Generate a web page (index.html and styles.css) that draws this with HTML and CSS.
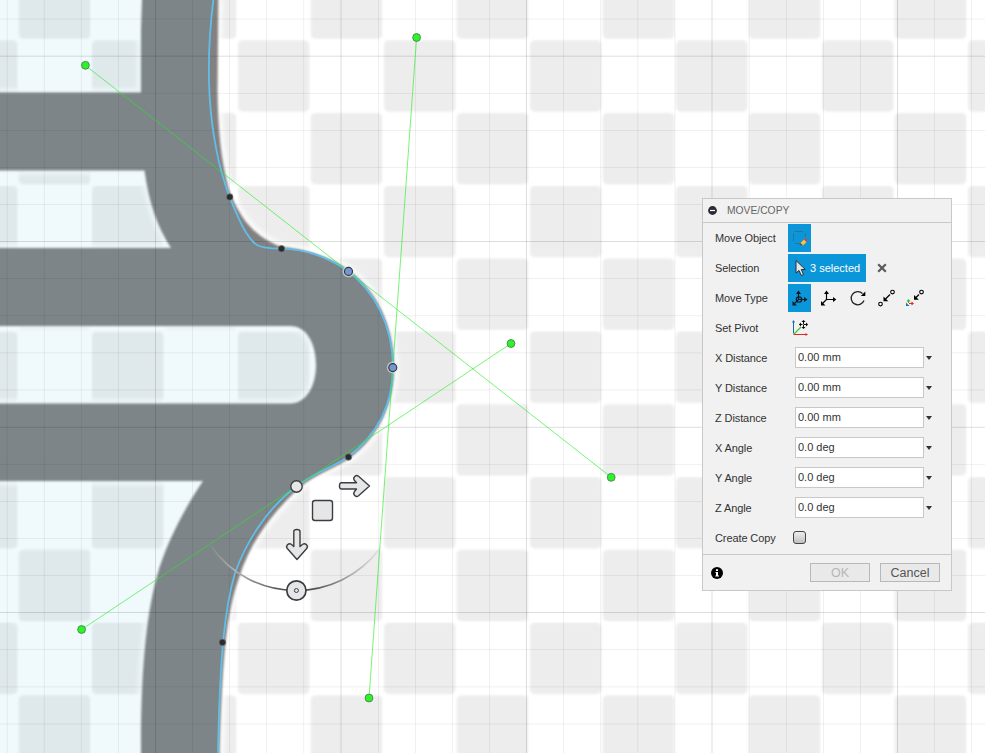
FILE: index.html
```html
<!DOCTYPE html>
<html lang="en">
<head>
<meta charset="utf-8">
<title>Move/Copy</title>
<link rel="stylesheet" href="styles.css">
</head>
<body>
<main class="workspace">
<svg class="canvas" width="985" height="753" viewBox="0 0 985 753">
  <defs>
    <pattern id="checker" x="91.2" y="39.700" width="146" height="145.6" patternUnits="userSpaceOnUse">
      <g fill="#ededed" filter="url(#soft)">
        <rect x=".7" y=".5" width="71.5" height="71.5" rx="5"/>
        <rect x="73.6" y="73.2" width="71.5" height="71.5" rx="5"/>
      </g>
    </pattern>
    <filter id="soft" color-interpolation-filters="sRGB"><feGaussianBlur stdDeviation="1"/></filter>
    <filter id="halo" color-interpolation-filters="sRGB"><feGaussianBlur stdDeviation="2"/></filter>
    <linearGradient id="arc" gradientUnits="userSpaceOnUse" x1="210" x2="382" y1="0" y2="0">
      <stop offset="0" stop-color="#aaa" stop-opacity=".15"/>
      <stop offset=".15" stop-color="#b0b0b0"/>
      <stop offset=".42" stop-color="#505052"/>
      <stop offset=".62" stop-color="#555557"/>
      <stop offset=".85" stop-color="#b8b8b8"/>
      <stop offset="1" stop-color="#bbb" stop-opacity=".15"/>
    </linearGradient>
    <path id="body" fill-rule="evenodd" d="M-20 -20H218.500L217.500 90C218 130 221 160 229 190C240 218 252 235 281 247C306 249 330 257 350 271C376 291 394 325 394 367C394 403 380 435 350 458C335 468 316 474 299 488C273 512 250 542 239 578C227 612 222 650 219 780H-20Z
      M-30 -30V92.500H141V30L143 -30Z M-30 170.500V248H171C157 226 149 203 144.500 170.500Z
      M-30 326V403.500H290C307 403.500 316 385 316 365C316 344 307 326 290 326Z
      M-30 481V790H141V745C141 680 145 620 157 576C166 544 183 511 203 481Z"/>
  </defs>
  <rect width="985" height="753" fill="#fff"/>
  <rect width="985" height="753" fill="url(#checker)"/>
  <use href="#body" fill="#fff" stroke="#fff" stroke-width="9" opacity=".75" filter="url(#halo)"/>
  <use href="#body" fill="#828080" filter="url(#soft)"/>
  <path fill="rgb(83,182,225)" fill-opacity=".087" d="M0 0H213.500C207 50 205 110 221.500 172C224 180 226 188 229.500 197C237 215 246 238 257 245C263 248.500 272 248.500 281.500 248.600C306 249 328 257 348 271C374 291 393 325 393 367C393 403 378 434 348 457C334 467 314 472 296 487C265 510 245 545 235 573C225 608 220 650 218 753H0Z"/>
  <g stroke="#000" stroke-opacity=".06" fill="none">
    <path d="M7.200 0V753M44.300 0V753M81.400 0V753M118.500 0V753M192.500 0V753M229.500 0V753M266.500 0V753M303.700 0V753M378.500 0V753M415.500 0V753M452.500 0V753M489.500 0V753M563.500 0V753M600.700 0V753M637.800 0V753M674.900 0V753M749.200 0V753M786.400 0V753M823.500 0V753M860.500 0V753M934.500 0V753M971.600 0V753"/>
    <path d="M0 19H985M0 93.400H985M0 130.500H985M0 167.500H985M0 204.500H985M0 278.500H985M0 315.700H985M0 352.900H985M0 389.900H985M0 464.400H985M0 501.500H985M0 538.500H985M0 575.500H985M0 649.500H985M0 686.900H985M0 724H985"/>
  </g>
  <path stroke="#000" stroke-opacity=".13" fill="none" d="M155.500 0V753M341 0V753M526.500 0V753M712 0V753M897.500 0V753M0 56.200H985M0 241.500H985M0 427.300H985M0 612.500H985"/>
  <path fill="none" stroke="#60bee8" stroke-width="1.800" d="M213.500 -1C207 50 205 110 221.500 172C224 180 226 188 229.500 197C237 215 246 238 257 245C263 248.500 272 248.500 281.500 248.600C306 249 328 257 348 271C374 291 393 325 393 367C393 403 378 434 348 457C334 467 314 472 296 487C265 510 245 545 235 573C225 608 220 650 218 754"/>
  <path fill="none" stroke="#22ee22" stroke-opacity=".62" stroke-width="1" d="M85.500 65.500L611.300 477.300M416.600 37.500L369 698M511 343.500L81.600 629.500"/>
  <g fill="#2df32d" stroke="#4a8f4a" stroke-width="1">
    <circle cx="85.400" cy="65.300" r="3.900"/><circle cx="416.600" cy="37.500" r="3.900"/><circle cx="511" cy="343.500" r="3.900"/>
    <circle cx="611.200" cy="477.300" r="3.900"/><circle cx="369" cy="698" r="3.900"/><circle cx="81.600" cy="629.500" r="3.900"/>
  </g>
  <g fill="#2b2b2b" stroke="#777" stroke-opacity=".75" stroke-width="1">
    <circle cx="229.700" cy="197" r="3.300"/><circle cx="281.500" cy="248.800" r="3.300"/><circle cx="348.400" cy="457" r="3.300"/><circle cx="222.400" cy="642.400" r="3.300"/>
  </g>
  <g fill="#eee" fill-opacity=".55"><circle cx="348.500" cy="271.400" r="6"/><circle cx="392.800" cy="367.600" r="6"/></g>
  <g fill="#7596d2" stroke="#30343c" stroke-width="1.100"><circle cx="348.500" cy="271.400" r="4"/><circle cx="392.800" cy="367.600" r="4"/></g>
  <path d="M211 546C251 604 338 606 381 547" fill="none" stroke="url(#arc)" stroke-width="1.700"/>
  <g fill="#e5e6e8" stroke="#3d3d3f" stroke-width="1.400" stroke-linejoin="round">
    <circle cx="296.500" cy="486.500" r="5.700"/>
    <rect x="312.500" y="500.500" width="20" height="20" rx="2.500"/>
    <circle cx="296.400" cy="590.500" r="9.600" stroke-width="1.700"/>
    <circle cx="296.400" cy="590.500" r="2" stroke-width="1"/>
    <path id="arrow" d="M341.500 482.800H356.500L354.300 480.200C352.500 477.700 356 474.200 358.500 476.300L369.500 486L358.500 495.700C356 497.800 352.500 494.300 354.300 491.800L356.500 489H341.500C338.800 489 338.800 482.800 341.500 482.800Z"/>
    <use href="#arrow" transform="matrix(0 1 1 0 -189 190)"/>
  </g>
</svg>

<section class="panel">
  <header class="panel-head">
    <svg width="9" height="9"><circle cx="4.500" cy="4.500" r="4.400" fill="#2c2b33"/><path d="M2 4.500H7" stroke="#fff" stroke-width="1.200"/></svg>
    <span>MOVE/COPY</span>
  </header>
  <div class="rows">
    <div class="row"><span class="label">Move Object</span>
      <span class="tile"><svg width="23" height="28"><path d="M7 7.500H16M5.500 9V17M17.500 9V13M7 19.500H12" stroke="#37718f" stroke-dasharray="8 1" fill="none"/><path d="M12.500 19L16 15.500L18.500 18L15 21.500Z" fill="#ffc13d"/><path d="M16 15.500L17.500 14L19.500 16L18.500 18Z" fill="#ee3b38"/><path d="M12.500 19L14.500 21L11.500 21.500Z" fill="#555"/></svg></span>
    </div>
    <div class="row"><span class="label">Selection</span>
      <span class="tile selection"><svg width="22" height="28"><path d="M8 6.500V19L11 16.500L13.300 21.500L15.500 20.500L13.300 15.500H17.300Z" fill="#e4e4e4" stroke="#22323c"/></svg>3 selected</span>
      <svg class="clear" width="10" height="10"><path d="M1.200 1.200L8.800 8.800M8.800 1.200L1.200 8.800" stroke="#5c5c5c" stroke-width="2.300"/></svg>
    </div>
    <div class="row"><span class="label">Move Type</span>
      <span class="tile"><svg width="23" height="28"><g fill="none" stroke="#101820" stroke-width="1.150"><path d="M10.500 8V15.500H17M10.500 15.500L5.500 20.500"/><circle cx="11" cy="15.500" r="2.700"/></g><path d="M8 10L10.500 6.500L13 10ZM16 13L19.500 15.500L16 18ZM4.500 17V21.500H9Z" fill="#101820"/></svg></span>
      <svg class="tool first" width="29" height="28"><path d="M15.500 8V15.500H23M15.500 15.500L11 20" fill="none" stroke="#000" stroke-width="1.150"/><path d="M13 10L15.500 6.500L18 10ZM22 13L25.300 15.500L22 18ZM10 17V21.500H14.500Z"/></svg>
      <svg class="tool" width="29" height="28"><path d="M21.500 9.500A6.600 6.600 0 1 0 23 16.500" fill="none" stroke="#222" stroke-width="1.300"/><path d="M24.300 7.500V12H19.800Z"/></svg>
      <svg class="tool" width="29" height="28"><g fill="#fff" stroke="#000" stroke-width="1.150"><circle cx="10.500" cy="20" r="1.800"/><circle cx="22.500" cy="8" r="1.800"/><path d="M20 10.500L15 15.500"/></g><path d="M13.500 12.500V17.300H18.300Z"/></svg>
      <svg class="tool" width="29" height="28"><g fill="#fff" stroke="#000" stroke-width="1.150"><circle cx="22.500" cy="8" r="1.800"/><path d="M20 10.500L16.500 14"/></g><path d="M15 11V15.800H19.800Z"/><path d="M9.500 19V16" stroke="#22c51b"/><path d="M7.500 17.500L9.500 15L11.500 17.500Z" fill="#22c51b"/><path d="M10 19.500H13" stroke="#e22"/><path d="M12.500 17.500L15 19.500L12.500 21.500Z" fill="#e22"/><path d="M7 18.500V22H10.500Z" fill="#1b70bb"/></svg>
    </div>
    <div class="row"><span class="label">Set Pivot</span>
      <svg width="24" height="28"><path d="M5.500 19.500V7" stroke="#1967b0"/><path d="M4 8.500L5.500 6L7 8.500Z" fill="#1967b0"/><path d="M6 20L13 13" stroke="#45c926" stroke-width="1.200"/><path d="M5.500 20.500H19" stroke="#df2929"/><path d="M17.500 19L20 20.500L17.500 22Z" fill="#df2929"/><path d="M15.500 7V15M11.500 10.500H19.500" stroke="#111" stroke-dasharray="3 1"/><path d="M13.500 8L15.500 6L17.500 8ZM13.500 13L15.500 15L17.500 13ZM13 8.500L11 10.500L13 12.500ZM18 8.500L20 10.500L18 12.500Z"/></svg>
    </div>
    <div class="row"><span class="label">X Distance</span><span class="field">0.00 mm</span><i class="caret"></i></div>
    <div class="row"><span class="label">Y Distance</span><span class="field">0.00 mm</span><i class="caret"></i></div>
    <div class="row"><span class="label">Z Distance</span><span class="field">0.00 mm</span><i class="caret"></i></div>
    <div class="row"><span class="label">X Angle</span><span class="field">0.0 deg</span><i class="caret"></i></div>
    <div class="row"><span class="label">Y Angle</span><span class="field">0.0 deg</span><i class="caret"></i></div>
    <div class="row"><span class="label">Z Angle</span><span class="field">0.0 deg</span><i class="caret"></i></div>
    <div class="row"><span class="label">Create Copy</span><span class="check"></span></div>
  </div>
  <footer class="panel-foot">
    <svg class="info" width="12" height="12"><circle cx="6" cy="6" r="6"/><path d="M5 2.300H7V4H5ZM4.500 5H7V8.500H8V9.500H4.300V8.500H5V6H4.500Z" fill="#fff"/></svg>
    <button class="btn" disabled>OK</button>
    <button class="btn">Cancel</button>
  </footer>
</section>
</main>
</body>
</html>
```
FILE: styles.css
```css
* { box-sizing: border-box; }
body { margin: 0; background: #fff; overflow: hidden; font: 11px "Liberation Sans", Arial, sans-serif; color: #333; }
svg { display: block; flex: none; }
.workspace { position: relative; width: 985px; height: 753px; overflow: hidden; }
.panel { position: absolute; left: 702px; top: 198px; width: 250px; height: 393px; display: flex; flex-direction: column; background: #f1f1f1; border: 1px solid #c8c8c8; }
.panel-head { height: 24px; flex: none; display: flex; align-items: center; gap: 10px; padding-left: 5px; border-bottom: 1px solid #c8c8c8; color: #666; font-size: 10.3px; }
.rows { height: 331px; flex: none; }
.row { height: 30px; display: flex; align-items: center; padding-left: 12px; }
.label { width: 73px; flex: none; padding-bottom: 1px; white-space: nowrap; letter-spacing: -.1px; }
.tile { width: 23px; height: 28px; display: flex; align-items: center; background: #0a96d9; }
.selection { width: 78px; color: #fff; }
.clear { margin-left: 11px; }
.tool.first { margin-right: 1px; }
.field { width: 129px; height: 21px; margin: 0 2px 1px 7px; padding-left: 2px; border: 1px solid #c8c8c8; background: #fff; line-height: 19px; }
.caret { width: 0; height: 0; border: 3px solid transparent; border-top: 4px solid #333; border-bottom: 0; }
.check { width: 13px; height: 13px; margin: 0 0 1px 5px; border: 1px solid #444; border-radius: 3px; background: linear-gradient(#eee, #c0c0c0); }
.panel-foot { height: 36px; flex: none; display: flex; align-items: center; gap: 10px; padding: 0 11px 0 8px; border-top: 1px solid #c8c8c8; }
.info { margin-right: auto; }
.btn { width: 60px; height: 19px; padding: 0; border: 1px solid #b8b8b8; background: #e9e9e9; color: #555; font: 12.5px/18px "Liberation Sans", Arial, sans-serif; }
.btn:disabled { color: #b5b5b5; }
```
